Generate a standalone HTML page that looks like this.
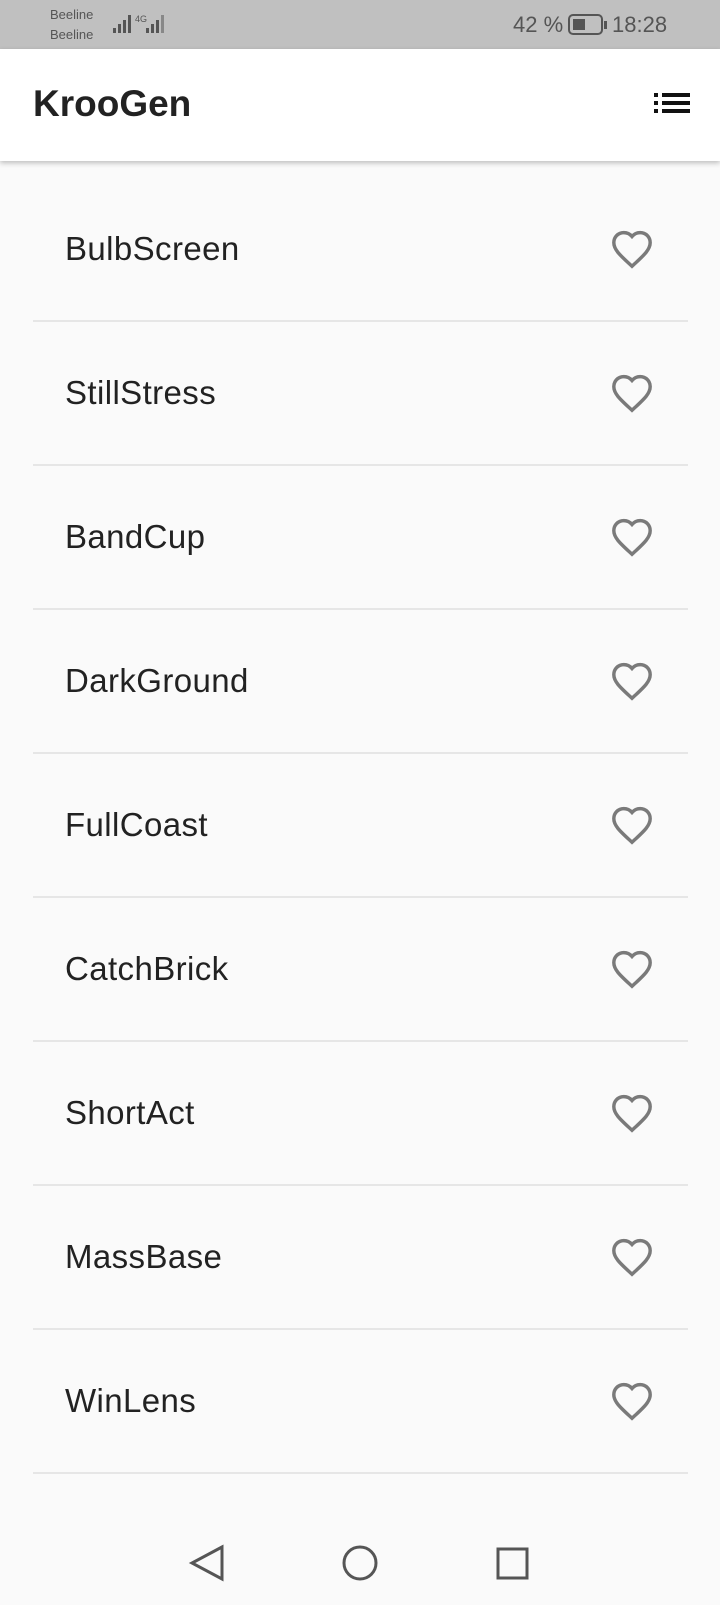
<!DOCTYPE html>
<html><head><meta charset="utf-8"><style>
body{margin:0;width:720px;height:1600px;background:#fafafa;font-family:"Liberation Sans",sans-serif;position:relative;overflow:hidden}
.sb{position:absolute;top:0;left:0;width:720px;height:49px;background:#c0c0c0;color:#555}
.ab{position:absolute;top:49px;left:0;width:720px;height:112px;background:#fff;box-shadow:0 2px 5px rgba(0,0,0,.25)}
.row{position:absolute;left:33px;width:655px;height:144px;border-bottom:2px solid #e6e6e6;box-sizing:border-box}
.row span{position:absolute;left:32px;top:50%;transform:translateY(-50%);font-size:33px;letter-spacing:0.4px;color:#222}
.row svg{position:absolute;left:577px;top:50%;transform:translateY(-50%)}
.nav{position:absolute;top:1515px;left:0;width:720px;height:85px;background:#fafafa}
</style></head><body>
<div class="sb">
<div style="position:absolute;left:50px;top:5px;font-size:13px;line-height:20px">Beeline<br>Beeline</div>
<svg style="position:absolute;left:113px;top:12px" width="62" height="22"><g fill="#555"><rect x="0" y="16" width="3" height="5"/><rect x="5" y="12" width="3" height="9"/><rect x="10" y="8" width="3" height="13"/><rect x="15" y="3" width="3" height="18"/><rect x="33" y="16" width="3" height="5"/><rect x="38" y="12" width="3" height="9"/><rect x="43" y="8" width="3" height="13"/></g><rect x="48" y="3" width="3" height="18" fill="#888"/><text x="22" y="10" font-size="9" fill="#555" font-family="Liberation Sans">4G</text></svg>
<div style="position:absolute;left:513px;top:12px;font-size:22px">42 %</div>
<svg style="position:absolute;left:568px;top:14px" width="40" height="22"><rect x="1" y="1" width="33" height="19" rx="4" fill="none" stroke="#555" stroke-width="2"/><rect x="5" y="5" width="12" height="11" fill="#555"/><rect x="36" y="7" width="3" height="8" fill="#555"/></svg>
<div style="position:absolute;left:612px;top:12px;font-size:22px">18:28</div>
</div>
<div class="ab">
<div style="position:absolute;left:33px;top:34px;font-size:37px;font-weight:bold;color:#222">KrooGen</div>
<svg style="position:absolute;left:654px;top:44px" width="38" height="24"><g fill="#111"><rect x="0" y="0" width="4" height="4"/><rect x="8" y="0" width="28" height="4"/><rect x="0" y="8" width="4" height="4"/><rect x="8" y="8" width="28" height="4"/><rect x="0" y="16" width="4" height="4"/><rect x="8" y="16" width="28" height="4"/></g></svg>
</div>
<div class="row" style="top:178px"><span>BulbScreen</span><svg width="44" height="40" viewBox="0 0 24 22"><path d="M12 20.5l-1.4-1.3C5.4 14.4 2 11.3 2 7.5 2 4.4 4.4 2 7.5 2c1.7 0 3.4.8 4.5 2.1C13.1 2.8 14.8 2 16.5 2 19.6 2 22 4.4 22 7.5c0 3.8-3.4 6.9-8.6 11.7z" fill="none" stroke="#7a7a7a" stroke-width="1.9"/></svg></div>
<div class="row" style="top:322px"><span>StillStress</span><svg width="44" height="40" viewBox="0 0 24 22"><path d="M12 20.5l-1.4-1.3C5.4 14.4 2 11.3 2 7.5 2 4.4 4.4 2 7.5 2c1.7 0 3.4.8 4.5 2.1C13.1 2.8 14.8 2 16.5 2 19.6 2 22 4.4 22 7.5c0 3.8-3.4 6.9-8.6 11.7z" fill="none" stroke="#7a7a7a" stroke-width="1.9"/></svg></div>
<div class="row" style="top:466px"><span>BandCup</span><svg width="44" height="40" viewBox="0 0 24 22"><path d="M12 20.5l-1.4-1.3C5.4 14.4 2 11.3 2 7.5 2 4.4 4.4 2 7.5 2c1.7 0 3.4.8 4.5 2.1C13.1 2.8 14.8 2 16.5 2 19.6 2 22 4.4 22 7.5c0 3.8-3.4 6.9-8.6 11.7z" fill="none" stroke="#7a7a7a" stroke-width="1.9"/></svg></div>
<div class="row" style="top:610px"><span>DarkGround</span><svg width="44" height="40" viewBox="0 0 24 22"><path d="M12 20.5l-1.4-1.3C5.4 14.4 2 11.3 2 7.5 2 4.4 4.4 2 7.5 2c1.7 0 3.4.8 4.5 2.1C13.1 2.8 14.8 2 16.5 2 19.6 2 22 4.4 22 7.5c0 3.8-3.4 6.9-8.6 11.7z" fill="none" stroke="#7a7a7a" stroke-width="1.9"/></svg></div>
<div class="row" style="top:754px"><span>FullCoast</span><svg width="44" height="40" viewBox="0 0 24 22"><path d="M12 20.5l-1.4-1.3C5.4 14.4 2 11.3 2 7.5 2 4.4 4.4 2 7.5 2c1.7 0 3.4.8 4.5 2.1C13.1 2.8 14.8 2 16.5 2 19.6 2 22 4.4 22 7.5c0 3.8-3.4 6.9-8.6 11.7z" fill="none" stroke="#7a7a7a" stroke-width="1.9"/></svg></div>
<div class="row" style="top:898px"><span>CatchBrick</span><svg width="44" height="40" viewBox="0 0 24 22"><path d="M12 20.5l-1.4-1.3C5.4 14.4 2 11.3 2 7.5 2 4.4 4.4 2 7.5 2c1.7 0 3.4.8 4.5 2.1C13.1 2.8 14.8 2 16.5 2 19.6 2 22 4.4 22 7.5c0 3.8-3.4 6.9-8.6 11.7z" fill="none" stroke="#7a7a7a" stroke-width="1.9"/></svg></div>
<div class="row" style="top:1042px"><span>ShortAct</span><svg width="44" height="40" viewBox="0 0 24 22"><path d="M12 20.5l-1.4-1.3C5.4 14.4 2 11.3 2 7.5 2 4.4 4.4 2 7.5 2c1.7 0 3.4.8 4.5 2.1C13.1 2.8 14.8 2 16.5 2 19.6 2 22 4.4 22 7.5c0 3.8-3.4 6.9-8.6 11.7z" fill="none" stroke="#7a7a7a" stroke-width="1.9"/></svg></div>
<div class="row" style="top:1186px"><span>MassBase</span><svg width="44" height="40" viewBox="0 0 24 22"><path d="M12 20.5l-1.4-1.3C5.4 14.4 2 11.3 2 7.5 2 4.4 4.4 2 7.5 2c1.7 0 3.4.8 4.5 2.1C13.1 2.8 14.8 2 16.5 2 19.6 2 22 4.4 22 7.5c0 3.8-3.4 6.9-8.6 11.7z" fill="none" stroke="#7a7a7a" stroke-width="1.9"/></svg></div>
<div class="row" style="top:1330px"><span>WinLens</span><svg width="44" height="40" viewBox="0 0 24 22"><path d="M12 20.5l-1.4-1.3C5.4 14.4 2 11.3 2 7.5 2 4.4 4.4 2 7.5 2c1.7 0 3.4.8 4.5 2.1C13.1 2.8 14.8 2 16.5 2 19.6 2 22 4.4 22 7.5c0 3.8-3.4 6.9-8.6 11.7z" fill="none" stroke="#7a7a7a" stroke-width="1.9"/></svg></div>
<div class="nav">
<svg width="720" height="85"><g fill="none" stroke="#555" stroke-width="3"><path d="M222 32 L192 48 L222 64 Z"/><circle cx="360" cy="48" r="16"/><rect x="498" y="34" width="29" height="29"/></g></svg>
</div>
</body></html>
